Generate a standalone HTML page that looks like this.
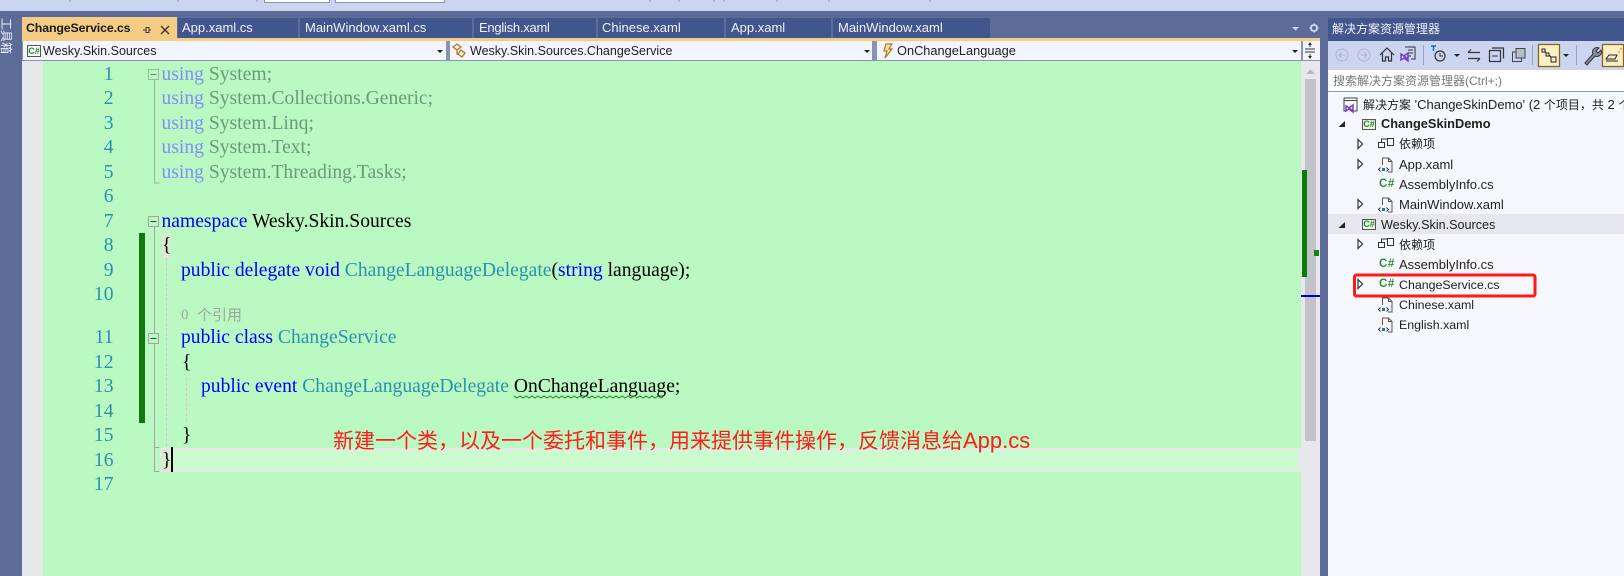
<!DOCTYPE html>
<html><head><meta charset="utf-8"><title>ChangeService.cs</title>
<style>
html,body{margin:0;padding:0;width:1624px;height:576px;overflow:hidden;background:#5d6b99}
div{position:absolute;white-space:nowrap}
.s{font-family:"Liberation Sans","Noto Sans CJK SC",sans-serif;font-size:12.5px;line-height:20px;color:#1e1e1e}
.tab{top:18px;height:20px;background:#40568d}
.tt{top:18px;color:#f0f2fa;line-height:20px;font-size:13px;font-family:"Liberation Sans",sans-serif}
.c{font-family:"Liberation Serif","Noto Serif CJK SC",serif;font-size:19.6px;line-height:24px;color:#000}
.n{left:60px;width:53.5px;text-align:right;color:#2b91af}
.k{color:#0000ff}.y{color:#2b91af}
.fk{color:#7d90fa}.fs{color:#6b9a78}
.r{font-family:"Liberation Sans","Noto Sans CJK SC",sans-serif;font-size:13px;line-height:20px;color:#1e1e1e}
.z{font-size:12px}
.cs{font-family:"Liberation Sans",sans-serif;font-size:11.5px;font-weight:bold;letter-spacing:.6px;line-height:20px;color:#2f8f2f;left:1379px}
</style></head><body>
<div style="left:0;top:0;width:1624px;height:11px;background:#ccd5f0"></div>
<div style="left:264px;top:0;width:64px;height:2px;background:#fff;border:1px solid #8a94b0;border-top:0"></div>
<div style="left:335px;top:0;width:108px;height:2px;background:#fff;border:1px solid #8a94b0;border-top:0"></div>

<div style="left:0;top:18px;width:12px;height:38px;writing-mode:vertical-rl;text-orientation:sideways;color:#eef0f8;font:12px/12px 'Noto Sans CJK SC',sans-serif">工具箱</div>

<div style="left:22px;top:17px;width:155px;height:22px;background:#f5cc84"></div>
<div style="left:22px;top:38px;width:1298px;height:3px;background:#f5cc84"></div>
<div class="tab" style="left:178px;width:120px"></div>
<div class="tab" style="left:300px;width:172px"></div>
<div class="tab" style="left:474px;width:122px"></div>
<div class="tab" style="left:598px;width:126px"></div>
<div class="tab" style="left:726px;width:105px"></div>
<div class="tab" style="left:833px;width:157px"></div>
<div class="tt" style="left:26px;color:#1a1a1a;font-weight:bold;font-size:12.4px;letter-spacing:-.15px">ChangeService.cs</div>
<div class="tt" style="left:182px">App.xaml.cs</div>
<div class="tt" style="left:305px">MainWindow.xaml.cs</div>
<div class="tt" style="left:479px;letter-spacing:-.25px">English.xaml</div>
<div class="tt" style="left:602px">Chinese.xaml</div>
<div class="tt" style="left:731px">App.xaml</div>
<div class="tt" style="left:838px">MainWindow.xaml</div>

<div style="left:22px;top:41px;width:1298px;height:19px;background:#8a94b0"></div>
<div style="left:23px;top:41px;width:423px;height:19px;background:#f2f5fd"></div>
<div style="left:450px;top:41px;width:422px;height:19px;background:#f2f5fd"></div>
<div style="left:877px;top:41px;width:424px;height:19px;background:#f2f5fd"></div>
<div style="left:1303px;top:41px;width:17px;height:19px;background:#f2f5fd"></div>
<div style="left:22px;top:60px;width:1298px;height:1px;background:#8a94b0"></div>
<div class="s" style="left:43px;top:41px">Wesky.Skin.Sources</div>
<div class="s" style="left:470px;top:41px">Wesky.Skin.Sources.ChangeService</div>
<div class="s" style="left:897px;top:41px;font-size:12.8px">OnChangeLanguage</div>

<div style="left:22px;top:61px;width:21px;height:515px;background:#e6e7e8"></div>
<div style="left:43px;top:61px;width:1258px;height:515px;background:#baf9c1"></div>
<div style="left:1301px;top:61px;width:19px;height:515px;background:#e8e8ec"></div>
<div style="left:1305px;top:79px;width:11px;height:362px;background:#c2c3c9"></div>
<div style="left:1302px;top:170px;width:5px;height:107px;background:#0e7a0e"></div>
<div style="left:1314px;top:250px;width:5px;height:6px;background:#0e8a0e"></div>
<div style="left:1301px;top:295px;width:19px;height:2px;background:#0000cd"></div>
<div style="left:1320px;top:11px;width:8px;height:565px;background:#5d6b99"></div>

<div style="left:160px;top:448px;width:1141px;height:24px;box-sizing:border-box;background:#ccfbd0;border-top:2px solid #e6e7ea;border-bottom:2px solid #e6e7ea;border-right:3px solid #e6e7ea"></div>
<div style="left:162px;top:233px;width:9px;height:25px;background:#dfe8d2"></div>
<div style="left:161px;top:449px;width:9px;height:22px;background:#dfe8d2"></div>
<div style="left:139px;top:233px;width:6px;height:190px;background:#0e7a0e"></div>
<div style="left:171px;top:447px;width:1.5px;height:25px;background:#000"></div>

<div class="c n" style="top:63px">1</div>
<div class="c n" style="top:87px">2</div>
<div class="c n" style="top:112px">3</div>
<div class="c n" style="top:136px">4</div>
<div class="c n" style="top:161px">5</div>
<div class="c n" style="top:185px">6</div>
<div class="c n" style="top:210px">7</div>
<div class="c n" style="top:234px">8</div>
<div class="c n" style="top:259px">9</div>
<div class="c n" style="top:283px">10</div>
<div class="c n" style="top:326px">11</div>
<div class="c n" style="top:351px">12</div>
<div class="c n" style="top:375px">13</div>
<div class="c n" style="top:400px">14</div>
<div class="c n" style="top:424px">15</div>
<div class="c n" style="top:449px">16</div>
<div class="c n" style="top:473px">17</div>

<div class="c fs" style="left:161.5px;top:63px"><span class="fk">using</span> System;</div>
<div class="c fs" style="left:161.5px;top:87px"><span class="fk">using</span> System.Collections.Generic;</div>
<div class="c fs" style="left:161.5px;top:112px"><span class="fk">using</span> System.Linq;</div>
<div class="c fs" style="left:161.5px;top:136px"><span class="fk">using</span> System.Text;</div>
<div class="c fs" style="left:161.5px;top:161px"><span class="fk">using</span> System.Threading.Tasks;</div>
<div class="c" style="left:161.5px;top:210px"><span class="k">namespace</span> Wesky.Skin.Sources</div>
<div class="c" style="left:162px;top:234px">{</div>
<div class="c" style="left:181px;top:259px"><span class="k">public delegate void</span> <span class="y">ChangeLanguageDelegate</span>(<span class="k">string</span> language);</div>
<div style="left:181px;top:304px;font:15px/22px 'Liberation Serif',serif;color:#9aa89c">0</div>
<div style="left:197px;top:304px;font:15px/22px 'Noto Sans CJK SC',sans-serif;color:#9aa89c">个引用</div>
<div class="c" style="left:181px;top:326px"><span class="k">public class</span> <span class="y">ChangeService</span></div>
<div class="c" style="left:182px;top:351px">{</div>
<div class="c" style="left:201px;top:375px"><span class="k">public event</span> <span class="y">ChangeLanguageDelegate</span> OnChangeLanguage;</div>
<div class="c" style="left:182px;top:424px">}</div>
<div class="c" style="left:162px;top:449px">}</div>

<div style="left:333px;top:426px;font:21px/30px 'Liberation Sans','Noto Sans CJK SC',sans-serif;color:#ff1c1c">新建一个类，以及一个委托和事件，用来提供事件操作，反馈消息给<span style="font-size:22px">App.cs</span></div>

<div style="left:1328px;top:18px;width:296px;height:23px;background:#40568d"></div>
<div style="left:1332px;top:19px;font:12px/20px 'Noto Sans CJK SC',sans-serif;color:#f0f2fa">解决方案资源管理器</div>
<div style="left:1328px;top:41px;width:296px;height:29px;background:#ccd5f0"></div>
<div style="left:1328px;top:70px;width:296px;height:506px;background:#f7f8fe"></div>
<div style="left:1329px;top:70px;width:295px;height:21px;background:#fff"></div>
<div style="left:1328px;top:91px;width:296px;height:1px;background:#8a94b0"></div>
<div style="left:1333px;top:71px;font:12px/21px 'Liberation Sans','Noto Sans CJK SC',sans-serif;color:#777">搜索解决方案资源管理器(Ctrl+;)</div>

<div style="left:1328px;top:214px;width:296px;height:20px;background:#e6e7ef"></div>
<div class="r" style="left:1363px;top:95px"><span class="z">解决方案</span> 'ChangeSkinDemo' (2 <span class="z">个项目，共</span> 2 <span class="z">个</span></div>
<div class="r" style="left:1381px;top:114px;font-weight:bold;font-size:12.8px">ChangeSkinDemo</div>
<div class="r z" style="left:1399px;top:134px">依赖项</div>
<div class="r" style="left:1399px;top:155px">App.xaml</div>
<div class="r" style="left:1399px;top:175px">AssemblyInfo.cs</div>
<div class="r" style="left:1399px;top:195px">MainWindow.xaml</div>
<div class="r" style="left:1381px;top:215px;font-size:12.6px">Wesky.Skin.Sources</div>
<div class="r z" style="left:1399px;top:235px">依赖项</div>
<div class="r" style="left:1399px;top:255px">AssemblyInfo.cs</div>
<div class="r" style="left:1399px;top:275px;font-size:12.4px">ChangeService.cs</div>
<div class="r" style="left:1399px;top:295px;font-size:12.4px">Chinese.xaml</div>
<div class="r" style="left:1399px;top:315px;font-size:12.4px">English.xaml</div>
<div class="cs" style="top:174px">C#</div>
<div class="cs" style="top:254px">C#</div>
<div class="cs" style="top:274px">C#</div>

<div style="left:27px;top:45px;width:12px;height:10px;border:1px solid #555;background:#fff;font:bold 9px/10px 'Liberation Sans',sans-serif;color:#1f8a1f;text-align:center">C#</div>
<div style="left:1362px;top:119px;width:12px;height:9px;border:1px solid #555;background:#e8f4e8;font:bold 9px/9px 'Liberation Sans',sans-serif;color:#1f8a1f;text-align:center">C#</div>
<div style="left:1362px;top:219px;width:12px;height:9px;border:1px solid #555;background:#eef2ee;font:bold 9px/9px 'Liberation Sans',sans-serif;color:#1f8a1f;text-align:center">C#</div>

<svg width="1624" height="576" viewBox="0 0 1624 576" style="position:absolute;left:0;top:0" fill="none">
<defs>
<g id="f">
<path d="M1382.500 165v-7h6l3.500 3.500v10.500h-4M1388.500 158v3.500h3.500" stroke="#555"/>
<path d="M1380.500 167.500l-2 2 2 2M1386.500 167.500l2 2-2 2" stroke="#333"/>
<rect x="1382" y="168" width="3" height="3" fill="#1a6fc0"/>
</g>
<g id="d" stroke="#333">
<rect x="1378.500" y="142.500" width="6" height="5"/>
<rect x="1387.500" y="138.500" width="6" height="7"/>
<path d="M1381.500 142v-3h6"/>
</g>
</defs>
<!-- top separators -->
<path d="M70 0v2M178 0v2M257 0v2M650 0v2M679 0v2M714 0v2M724 0v2M777 0v2M829 0v2M930 0v2" stroke="#8a94b0"/>
<!-- pin and close -->
<path d="M143 30h3M146 27.500v5h3v-5zM149 30h2" stroke="#333"/>
<path d="M161 26l8 8M169 26l-8 8" stroke="#333" stroke-width="1.300"/>
<!-- tab overflow and gear -->
<path d="M1292 27h7l-3.500 3.500z" fill="#ccd5f0"/>
<circle cx="1314" cy="28" r="3" stroke="#ccd5f0" stroke-width="1.800"/>
<path d="M1314 23.500v2M1314 30.500v2M1309.500 28h2M1316.500 28h2M1311 25l1 1M1317 25l-1 1M1311 31l1-1M1317 31l-1-1" stroke="#ccd5f0" stroke-width="1.500"/>
<!-- nav arrows -->
<path d="M437 50h6l-3 3zM864 50h6l-3 3zM1292 50h6l-3 3z" fill="#222"/>
<!-- class icon -->
<path d="M453 47l4-3 4 3-4 3zM461 50l4 3-3 4-4-3zM457 50v4h2" stroke="#b1781c" stroke-width="1.300"/>
<!-- lightning -->
<path d="M886 44h6l-3 5h3l-7 9 2-7h-3z" stroke="#b1781c" stroke-width="1.200" fill="#f5e6b8"/>
<!-- splitter -->
<path d="M1305 49h10M1305 52h10M1310 43v4M1310 54v4" stroke="#333"/>
<path d="M1308 45l2-3 2 3zM1308 56l2 3 2-3z" fill="#333"/>
<!-- scroll up -->
<path d="M1306 74l4.500-4.500 4.500 4.500z" fill="#b5b6bb"/>
<!-- fold -->
<path d="M154.500 80v103h5" stroke="#9eb7a4"/>
<path d="M154.500 227v244.500h5M154.500 447.500h5" stroke="#a5a5a5"/>
<rect x="148.500" y="69.500" width="10" height="10" stroke="#9eb7a4" fill="#baf9c1"/>
<path d="M150.500 74.500h6" stroke="#68806f"/>
<rect x="148.500" y="216.500" width="10" height="10" stroke="#a5a5a5" fill="#baf9c1"/>
<path d="M150.500 221.500h6" stroke="#444"/>
<rect x="148.500" y="333.500" width="10" height="10" stroke="#a5a5a5" fill="#baf9c1"/>
<path d="M150.500 338.500h6" stroke="#444"/>
<!-- indent guides -->
<path d="M166.500 258v190M186.500 378v44" stroke="#d9c6d0" stroke-dasharray="3 2"/>
<!-- squiggle -->
<path d="M514 396l3 2 3-2 3 2 3-2 3 2 3-2 3 2 3-2 3 2 3-2 3 2 3-2 3 2 3-2 3 2 3-2 3 2 3-2 3 2 3-2 3 2 3-2 3 2 3-2 3 2 3-2 3 2 3-2 3 2 3-2 3 2 3-2 3 2 3-2 3 2 3-2 3 2 3-2 3 2 3-2 3 2 3-2 3 2 3-2 3 2 3-2 3 2 3-2 3 2 3-2" stroke="#1f8a1f"/>
<!-- se toolbar -->
<circle cx="1342" cy="55" r="6" stroke="#b0b7cc"/><path d="M1345 55h-6M1341.500 52.500l-2.500 2.500 2.500 2.500" stroke="#b0b7cc"/>
<circle cx="1364" cy="55" r="6" stroke="#b0b7cc"/><path d="M1361 55h6M1364.500 52.500l2.500 2.500-2.500 2.500" stroke="#b0b7cc"/>
<path d="M1380 55l7-7 7 7M1382.500 53v8h3v-4h3v4h3v-8" stroke="#333" stroke-width="1.200"/>
<path d="M1405 47h10v12h-4" stroke="#333"/><path d="M1408 50h5M1408 53h5M1408 56h3" stroke="#333"/>
<path d="M1401 54l3 2 4-3v8l-4-3-3 2zM1404 56l4 3" stroke="#7a3fb8" stroke-width="1.500"/>
<path d="M1423.500 45v20" stroke="#97a3c4"/>
<path d="M1433.500 46v5" stroke="#1a6fc0" stroke-width="1.500"/><path d="M1431 46h5" stroke="#1a6fc0" stroke-width="1.500"/>
<circle cx="1440" cy="56" r="5" stroke="#333" stroke-width="1.200"/><path d="M1440 53v3h3" stroke="#333"/>
<path d="M1454 54h6l-3 3z" fill="#222"/>
<path d="M1468 52.500h12M1468 52.500l3-3M1468 58.500h12M1480 58.500l-3 3" stroke="#333" stroke-width="1.200"/>
<rect x="1489.500" y="50.500" width="11" height="11" stroke="#333" stroke-width="1.200"/><path d="M1492 48h11.500v10.500" stroke="#333" stroke-width="1.200"/><path d="M1492 56h6" stroke="#333"/>
<rect x="1512.500" y="52" width="9" height="9.500" stroke="#444"/><rect x="1516" y="48.500" width="9" height="9.500" stroke="#444" fill="#b8bccb"/>
<path d="M1532.500 45v20" stroke="#97a3c4"/>
<rect x="1538.500" y="44.500" width="21" height="22" fill="#fdf0c8" stroke="#8a6414" stroke-width="1.300"/>
<path d="M1542 49h3v3h-3zM1546 53h3v3h-3zM1551 57h5v5h-5zM1545 51l1 2M1549 55l2 2" stroke="#222"/>
<path d="M1563 54h6l-3 3z" fill="#222"/>
<path d="M1576.500 45v20" stroke="#97a3c4"/>
<path d="M1585 63l8-9a4.500 4.500 0 0 1 6-6l-3 3 2 2 3-3a4.500 4.500 0 0 1-6 6l-8 9z" stroke="#333" fill="#8a8f9c"/>
<rect x="1602.500" y="44.500" width="21" height="22" fill="#fdf0c8" stroke="#8a6414" stroke-width="1.300"/>
<path d="M1606 59h9l2-4h-8zM1606 61h12" stroke="#222"/><path d="M1618 52h2M1620 49h2" stroke="#c77a1a"/>
<!-- tree: solution -->
<path d="M1344 98h13v13h-5M1344 98v13h2M1344 100.500h13" stroke="#444"/>
<path d="M1346 106l3 2 4-3v7l-4-3-3 2zM1349 108l4 3" stroke="#7a3fb8" stroke-width="1.500"/>
<!-- expanded arrows -->
<path d="M1345 121v6h-6.500zM1345 222v6h-6.500z" fill="#222"/>
<!-- collapsed arrows -->
<path d="M1358 139.500l4.500 4.500-4.500 4.500zM1358 159.500l4.500 4.500-4.500 4.500zM1358 199.500l4.500 4.500-4.500 4.500zM1358 239.500l4.500 4.500-4.500 4.500zM1358 279.500l4.500 4.500-4.500 4.500z" stroke="#333" stroke-width="1.200"/>
<!-- dep icons -->
<use href="#d"/><use href="#d" y="100"/>
<!-- xaml file icons -->
<use href="#f"/><use href="#f" y="40"/><use href="#f" y="140"/><use href="#f" y="160"/>
<!-- red annotation box -->
<rect x="1354.500" y="275" width="180.500" height="21" rx="2" stroke="#ff1a1a" stroke-width="3"/>
</svg>
</body></html>
